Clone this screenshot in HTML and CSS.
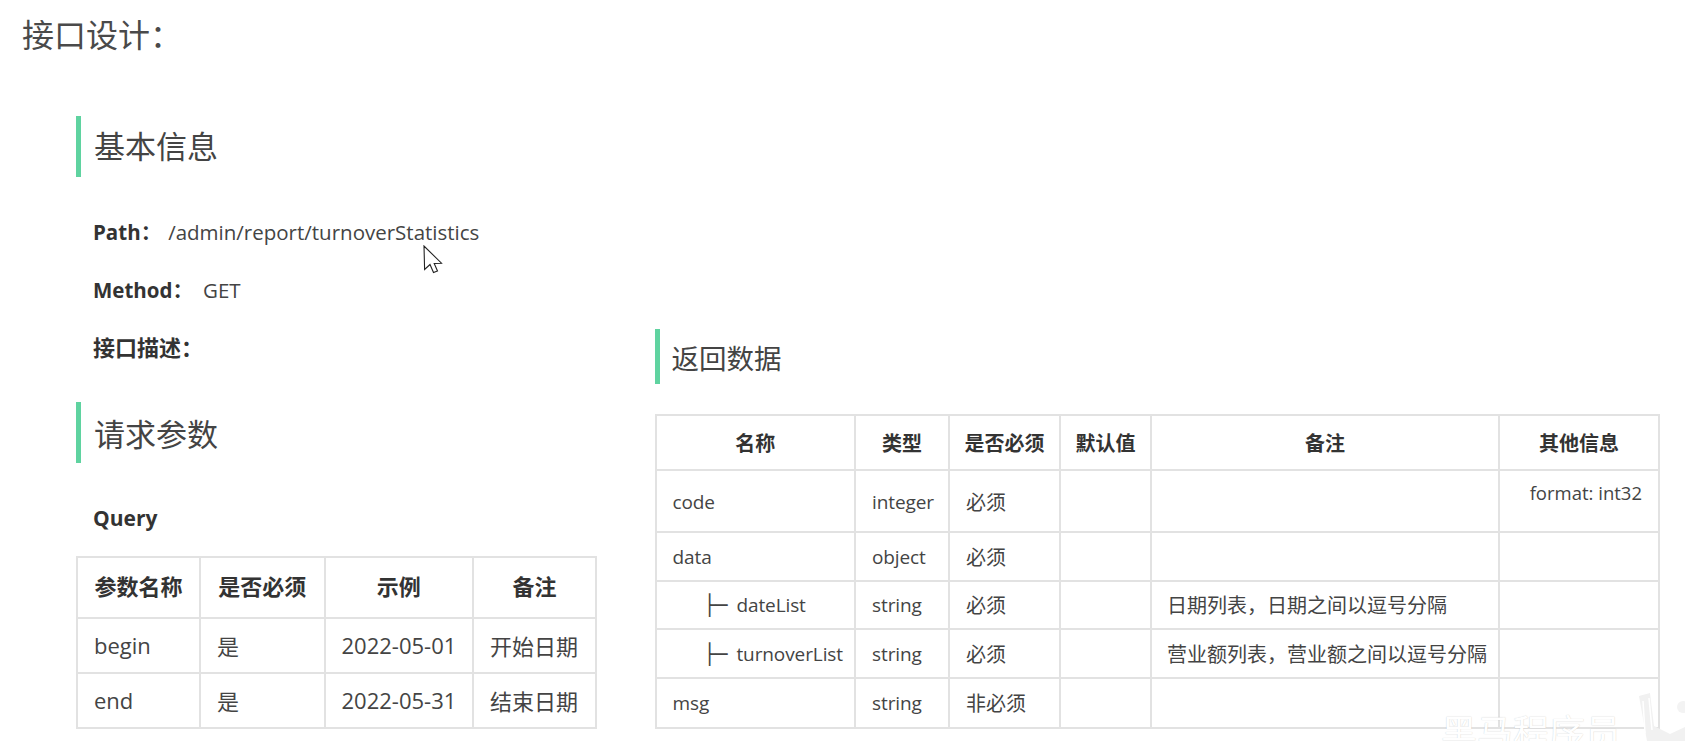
FILE: index.html
```html
<!DOCTYPE html>
<html lang="zh-CN">
<head>
<meta charset="utf-8">
<title>接口设计</title>
<link rel="stylesheet" href="styles.css">
</head>
<body>
<main class="page">
  <h1 class="title">接口设计：</h1>
  <div class="columns">
    <section class="left">
      <h2 class="section-head">基本信息</h2>
      <p class="line path"><b>Path：</b><span class="val">/admin/report/turnoverStatistics</span></p>
      <p class="line method"><b>Method：</b><span class="val">GET</span></p>
      <p class="line desc"><b>接口描述：</b></p>
      <h2 class="section-head second">请求参数</h2>
      <p class="line query"><b>Query</b></p>
      <table class="tbl req">
        <colgroup><col class="r1"><col class="r2"><col class="r3"><col class="r4"></colgroup>
        <thead><tr class="rh"><th>参数名称</th><th>是否必须</th><th>示例</th><th>备注</th></tr></thead>
        <tbody>
          <tr class="rb"><td>begin</td><td>是</td><td>2022-05-01</td><td>开始日期</td></tr>
          <tr class="rb"><td>end</td><td>是</td><td>2022-05-31</td><td>结束日期</td></tr>
        </tbody>
      </table>
    </section>
    <section class="right">
      <h2 class="section-head small">返回数据</h2>
      <table class="tbl res">
        <colgroup><col class="c1"><col class="c2"><col class="c3"><col class="c4"><col class="c5"><col class="c6"></colgroup>
        <thead><tr class="h-head"><th>名称</th><th>类型</th><th>是否必须</th><th>默认值</th><th>备注</th><th>其他信息</th></tr></thead>
        <tbody>
          <tr class="h-code"><td class="en">code</td><td class="en">integer</td><td>必须</td><td></td><td></td><td class="fmt">format: int32</td></tr>
          <tr class="h-row"><td class="en">data</td><td class="en">object</td><td>必须</td><td></td><td></td><td></td></tr>
          <tr class="h-row"><td class="sub en"><span class="tree">├─</span> dateList</td><td class="en">string</td><td>必须</td><td></td><td class="note">日期列表，日期之间以逗号分隔</td><td></td></tr>
          <tr class="h-row"><td class="sub en"><span class="tree">├─</span> turnoverList</td><td class="en">string</td><td>必须</td><td></td><td class="note">营业额列表，营业额之间以逗号分隔</td><td></td></tr>
          <tr class="h-last"><td class="en">msg</td><td class="en">string</td><td>非必须</td><td></td><td></td><td></td></tr>
        </tbody>
      </table>
    </section>
  </div>
</main>
<svg class="cursor" width="22" height="30" viewBox="0 0 22 30"><path d="M1 1 L1.6 24.5 L7 19.5 L10.5 27.5 L14.5 26 L11.2 18.5 L18.5 18.2 Z" fill="#fff" stroke="#222" stroke-width="1.1" stroke-linejoin="miter"/></svg>
<div class="wm-text">黑马程序员</div>
<svg class="wm-logo" width="46" height="48" viewBox="0 0 46 48"><path d="M0 3 L11 0 L15 33 L31 41 L46 34 L46 48 L8 48 Z" fill="#f1f1f1"/><path d="M4 8 L6 40 M10 5 L13 37" stroke="#fff" stroke-width="1.5" fill="none"/><circle cx="44" cy="14" r="6" fill="#f3f3f3"/></svg>
</body>
</html>
```
FILE: styles.css
```css
* { box-sizing: border-box; }
html, body { margin: 0; height: 741px; overflow: hidden; background: #fff; }
body {
  position: relative;
  font-family: "Open Sans", "Noto Sans CJK SC", sans-serif;
  color: #444;
}
.page { padding: 13px 26px 12px 22px; height: 741px; display: flex; flex-direction: column; }
.title { margin: 0; font-size: 32px; line-height: 44px; font-weight: 400; color: #4a4a4a; }
.columns {
  flex: 1;
  margin-left: 54px;
  display: grid;
  grid-template-columns: 519px 1004px;
  column-gap: 59.5px;
  align-items: end;
}
.section-head {
  margin: 0;
  height: 61px;
  border-left: 5px solid #5fd3a0;
  padding-left: 13px;
  font-size: 31px;
  line-height: 61px;
  font-weight: 400;
  color: #444;
}
.section-head.second { margin-top: 41px; line-height: 65px; }
.section-head.small { height: 55px; line-height: 59px; font-size: 27.5px; margin-bottom: 30px; padding-left: 12px; }
.line { margin: 0; padding-left: 17px; font-size: 20.5px; line-height: 28px; color: #444; }
.line b { color: #333; font-weight: 700; }
.val { margin-left: 7px; }
.method .val { margin-left: 10px; }
.path { margin-top: 41px; }
.method { margin-top: 30px; }
.desc { margin-top: 29px; font-size: 22px; }
.query { margin-top: 41px; font-size: 21px; }
.req { margin-top: 24px; }
.tbl {
  border-collapse: collapse;
  table-layout: fixed;
  width: 100%;
  color: #444;
}
.tbl th, .tbl td {
  border: 2px solid #e2e2e2;
  padding: 0 16px;
  text-align: left;
  white-space: nowrap;
  overflow: hidden;
  vertical-align: middle;
}
.tbl th { color: #333; font-weight: 700; text-align: center; }
.req { font-size: 22px; }
.res { font-size: 20px; }
.r1 { width: 123px; } .r2 { width: 124.5px; } .r3 { width: 148.5px; } .r4 { width: 123px; }
.rh { height: 61px; } .rb { height: 55px; }
.req th, .req td { padding: 0 8px 2px 16px; }
.req th { padding: 0 0 6px; }
.c1 { width: 199.5px; } .c2 { width: 94px; } .c3 { width: 111px; } .c4 { width: 91px; } .c5 { width: 348px; } .c6 { width: 160px; }
.h-head { height: 55px; } .h-code { height: 62px; } .h-row { height: 48.5px; } .h-last { height: 50.5px; }
.res th, .res td { padding: 0 0 0 16px; }
.res th { padding: 0; }
.res .en { font-size: 19px; letter-spacing: -.1px; padding-top: 1px; }
.res .sub { padding-left: 47px; }
.tree { font-family: "DejaVu Sans Mono", monospace; font-size: 20px; letter-spacing: 0; margin-right: 4px; }
.res .note { padding-left: 15px; }
.res .fmt { vertical-align: top; text-align: right; padding: 9px 16px 0 0; font-size: 18.5px; }
.cursor { position: absolute; left: 423px; top: 245px; }
.wm-text {
  position: absolute;
  left: 1441px;
  top: 705px;
  font-family: "Noto Sans CJK SC", sans-serif;
  font-size: 36px;
  line-height: 50px;
  white-space: nowrap;
  color: #fff;
  text-shadow: 0 0 1px rgba(0,0,0,.22);
}
.wm-logo { position: absolute; left: 1639px; top: 693px; }
```
